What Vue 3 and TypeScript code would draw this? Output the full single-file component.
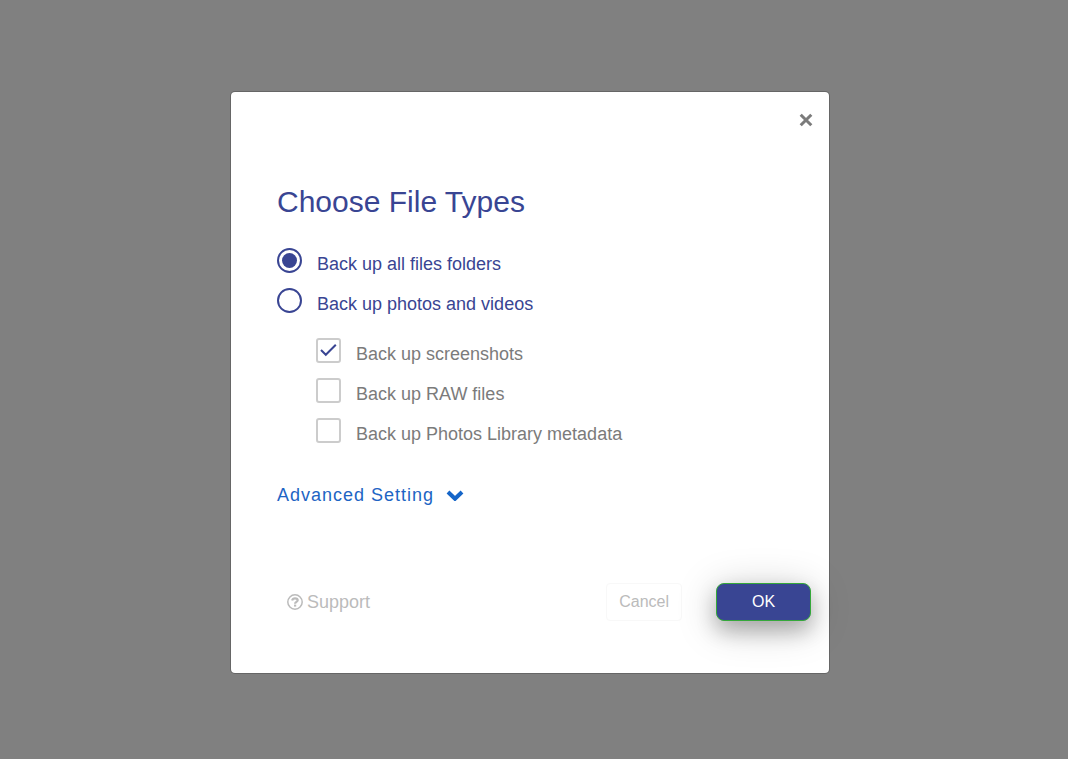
<script setup lang="ts">
import { ref } from 'vue'

interface Option {
  id: string
  label: string
}

const scopes: Option[] = [
  { id: 'all', label: 'Back up all files folders' },
  { id: 'media', label: 'Back up photos and videos' },
]

const extras: Option[] = [
  { id: 'screenshots', label: 'Back up screenshots' },
  { id: 'raw', label: 'Back up RAW files' },
  { id: 'metadata', label: 'Back up Photos Library metadata' },
]

const scope = ref('all')
const selected = ref<string[]>(['screenshots'])
</script>

<template>
  <div class="overlay">
    <section class="dialog" role="dialog" aria-modal="true" aria-labelledby="dialog-title">
      <header class="top">
        <button class="close" type="button" aria-label="Close">
          <svg viewBox="0 0 14 14" width="14" height="14" aria-hidden="true">
            <path d="M1.7 1.7 12.3 12.3M12.3 1.7 1.7 12.3" />
          </svg>
        </button>
      </header>

      <form class="body" @submit.prevent>
        <h1 id="dialog-title">Choose File Types</h1>

        <div class="group" role="radiogroup" aria-labelledby="dialog-title">
          <label v-for="item in scopes" :key="item.id" class="option">
            <span class="mark"><input v-model="scope" type="radio" name="scope" :value="item.id" /></span>
            <span class="text">{{ item.label }}</span>
          </label>
        </div>

        <div class="group nested">
          <label v-for="item in extras" :key="item.id" class="option">
            <span class="mark">
              <input v-model="selected" type="checkbox" :value="item.id" />
              <svg v-if="selected.includes(item.id)" viewBox="0 0 25 25" width="25" height="25" aria-hidden="true">
                <path d="M5 12 9.8 16.8 19.8 6.8" />
              </svg>
            </span>
            <span class="text">{{ item.label }}</span>
          </label>
        </div>

        <a class="advanced" href="#">
          Advanced Setting
          <svg viewBox="0 0 18 12" width="18" height="12" aria-hidden="true">
            <path d="M2 3 9 9.8 16 3" />
          </svg>
        </a>
      </form>

      <footer class="footer">
        <a class="support" href="#">
          <svg viewBox="0 0 16 16" width="16" height="16" aria-hidden="true">
            <circle cx="8" cy="8" r="7.2" />
            <path class="hook" d="M5.1 6.5C5.5 5 6.6 4.3 8 4.3 9.5 4.3 10.7 5.1 10.7 6.3 10.7 8 8.1 7.9 8.1 9.7" />
            <path class="dot" d="M7 10.6h2.2v2H7z" />
          </svg>
          Support
        </a>
        <button class="cancel" type="button">Cancel</button>
        <button class="ok" type="button">OK</button>
      </footer>
    </section>
  </div>
</template>

<style>
body {
  margin: 0;
  background: #808080;
}
</style>

<style scoped>
.overlay {
  box-sizing: border-box;
  min-height: 100vh;
  display: flex;
  justify-content: center;
  align-items: flex-start;
  padding: 91px 8px 40px 0;
  background: #808080;
  font-family: "Liberation Sans", Arial, sans-serif;
  font-size: 18px;
}

.dialog {
  box-sizing: border-box;
  width: 100%;
  max-width: 600px;
  border: 1px solid rgba(0, 0, 0, 0.2);
  border-radius: 5px;
  background: #fff;
  background-clip: padding-box;
}

.top {
  display: flex;
  justify-content: flex-end;
  padding: 16px 11px 0;
}

button {
  font-family: inherit;
  cursor: pointer;
}

.close {
  display: grid;
  place-items: center;
  width: 24px;
  height: 24px;
  padding: 0;
  border: 0;
  background: none;
}

.close path {
  fill: none;
  stroke: #7b7b7b;
  stroke-width: 3;
}

.body {
  padding: 52px 46px 0;
}

h1 {
  margin: 0;
  color: #394593;
  font-size: 30px;
  font-weight: 400;
  line-height: 36px;
}

.group {
  display: grid;
  gap: 15px;
  margin-top: 28px;
  color: #394593;
}

.nested {
  margin: 25px 0 0 39px;
  color: #7b7b7b;
}

.option {
  display: flex;
  align-items: flex-start;
  gap: 15px;
  height: 25px;
  cursor: pointer;
}

.mark {
  display: grid;
  flex: none;
}

.mark > * {
  grid-area: 1 / 1;
}

.mark svg {
  pointer-events: none;
}

.mark path {
  fill: none;
  stroke: #394593;
  stroke-width: 2;
}

.text {
  padding-top: 5px;
  line-height: 22px;
}

input {
  appearance: none;
  box-sizing: border-box;
  width: 25px;
  height: 25px;
  margin: 0;
  background: #fff;
  cursor: pointer;
}

input[type="radio"] {
  display: grid;
  place-items: center;
  border: 2px solid #394593;
  border-radius: 50%;
}

input[type="radio"]:checked::before {
  content: "";
  width: 15px;
  height: 15px;
  border-radius: 50%;
  background: #394593;
}

input[type="checkbox"] {
  border: 2px solid #ccc;
  border-radius: 3px;
}

.advanced {
  display: inline-flex;
  align-items: center;
  gap: 12px;
  margin-top: 41px;
  color: #1d64c4;
  letter-spacing: 1px;
  line-height: 22px;
  text-decoration: none;
}

.advanced path {
  fill: none;
  stroke: #1565c8;
  stroke-width: 4;
}

.footer {
  display: flex;
  align-items: center;
  padding: 77px 18px 52px 56px;
}

.support {
  display: flex;
  align-items: center;
  gap: 4px;
  margin-right: auto;
  color: #bbb;
  text-decoration: none;
}

.support circle,
.hook {
  fill: none;
  stroke: #bbb;
  stroke-width: 1.5;
}

.support .hook {
  stroke-width: 2.2;
}

.dot {
  fill: #bbb;
}

.cancel,
.ok {
  box-sizing: border-box;
  height: 38px;
  padding: 0 12px;
  font-size: 16px;
}

.cancel {
  border: 1px solid #f8f8f8;
  border-radius: 4px;
  background: #fff;
  color: #bbb;
}

.ok {
  width: 95px;
  margin-left: 34px;
  border: 1px solid #35a83a;
  border-radius: 8px;
  background: #394593;
  color: #fff;
  box-shadow: 0 10px 20px 0 rgba(0, 0, 0, 0.24), 0 6px 40px 0 rgba(0, 0, 0, 0.22);
}
</style>
